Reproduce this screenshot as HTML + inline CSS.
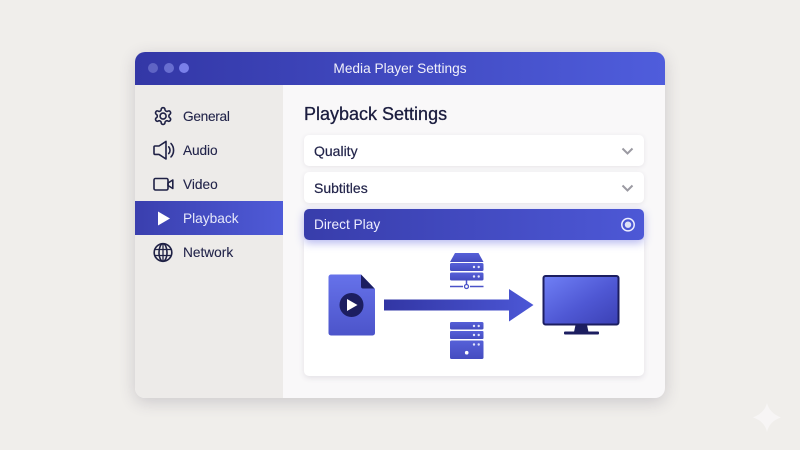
<!DOCTYPE html>
<html><head><meta charset="utf-8">
<style>
html,body{margin:0;padding:0}
body{width:800px;height:450px;background:#f0eeeb;overflow:hidden;position:relative;font-family:"Liberation Sans",sans-serif;color:#1b1d3f}
.abs{position:absolute}
#win{left:135px;top:52px;width:530px;height:346px;border-radius:10px;box-shadow:0 4px 16px rgba(60,55,80,.2);background:#f9f8f9}
#title{left:0;top:0;width:530px;height:33px;border-radius:10px 10px 0 0;background:linear-gradient(90deg,#3337a6,#4f5ddc)}
#title span{position:absolute;left:0;width:530px;top:9px;text-align:center;color:#f0f0fa;font-size:13.7px;line-height:16px}
.dot{width:10px;height:10px;border-radius:50%;top:11px}
#side{left:0;top:33px;width:148px;height:313px;background:#edebe9;border-radius:0 0 0 10px}
.lbl{position:absolute;left:183px;font-size:13.7px;color:#22244a;line-height:16px;-webkit-text-stroke:.1px #22244a}
#pb{left:135px;top:201px;width:148px;height:34px;background:linear-gradient(90deg,#3a3fae,#4f5bd8)}
h1{position:absolute;left:304px;top:104px;margin:0;font-size:18px;font-weight:normal;color:#1b1d3f;-webkit-text-stroke:.3px #1b1d3f;line-height:21px}
.row{position:absolute;left:304px;width:340px;height:31px;background:#fff;border-radius:5px;box-shadow:0 1px 5px rgba(70,60,90,.1)}
.row span{position:absolute;left:10px;top:8px;font-size:14px;line-height:16px;color:#22244a;-webkit-text-stroke:.2px #22244a}
#dp{top:209px;background:linear-gradient(90deg,#383dab,#4d58d6);box-shadow:0 3px 9px rgba(70,75,215,.4)}
#dp span{color:#eef;-webkit-text-stroke:0;font-size:13.7px}
#panel{left:304px;top:240px;width:340px;height:136px;background:#fff;border-radius:0 0 5px 5px;box-shadow:0 2px 6px rgba(70,60,90,.12)}
</style></head><body>
<div class="abs" id="win">
 <div class="abs" id="side"></div>
 <div class="abs" id="title">
  <div class="abs dot" style="left:13px;background:#5f64c4"></div>
  <div class="abs dot" style="left:29px;background:#686ed0"></div>
  <div class="abs dot" style="left:44px;background:#7a80ea"></div>
  <span>Media Player Settings</span>
 </div>
</div>
<div class="abs" id="pb"></div>

<svg class="abs" style="left:0;top:0" width="800" height="450" viewBox="0 0 800 450" fill="none" stroke="#1f2145" stroke-width="1.600" stroke-linejoin="round" stroke-linecap="round">
 <!-- gear -->
 <g transform="translate(153 106) scale(.84)" stroke-width="1.900">
  <path d="M12.22 2h-.44a2 2 0 0 0-2 2v.18a2 2 0 0 1-1 1.73l-.43.25a2 2 0 0 1-2 0l-.15-.08a2 2 0 0 0-2.730.73l-.22.38a2 2 0 0 0 .73 2.730l.15.1a2 2 0 0 1 1 1.720v.51a2 2 0 0 1-1 1.740l-.15.09a2 2 0 0 0-.73 2.730l.22.38a2 2 0 0 0 2.730.73l.15-.08a2 2 0 0 1 2 0l.43.25a2 2 0 0 1 1 1.730V20a2 2 0 0 0 2 2h.44a2 2 0 0 0 2-2v-.18a2 2 0 0 1 1-1.730l.43-.25a2 2 0 0 1 2 0l.15.08a2 2 0 0 0 2.730-.73l.22-.39a2 2 0 0 0-.73-2.730l-.15-.08a2 2 0 0 1-1-1.740v-.5a2 2 0 0 1 1-1.740l.15-.09a2 2 0 0 0 .73-2.730l-.22-.38a2 2 0 0 0-2.730-.73l-.15.08a2 2 0 0 1-2 0l-.43-.25a2 2 0 0 1-1-1.730V4a2 2 0 0 0-2-2z"/>
  <circle cx="12" cy="12" r="3.600"/>
 </g>
 <!-- speaker -->
 <path d="M155 146h4l7-4.600v17.600l-7-4.600h-4a1 1 0 0 1-1-1v-6.400a1 1 0 0 1 1-1z"/>
 <path d="M168.700 146.800a5 5 0 0 1 0 6.800M171 143.500a10 10 0 0 1 0 13.400"/>
 <!-- video -->
 <rect x="154" y="178.500" width="14" height="11.500" rx="1.500"/>
 <path d="M168 183l4.800-3v8.500L168 185.500z"/>
 <!-- globe -->
 <circle cx="163" cy="252.500" r="8.800"/>
 <ellipse cx="163" cy="252.500" rx="4" ry="8.800"/>
 <path d="M163 244v17M155.500 249.500h15M155.500 255.500h15" stroke-width="1.300"/>
</svg>
<svg class="abs" style="left:0;top:0" width="800" height="450" viewBox="0 0 800 450">
 <path d="M158 211.500L170 218.500L158 225.500z" fill="#fff"/>
</svg>

<div class="lbl" style="top:109px;letter-spacing:-.3px">General</div>
<div class="lbl" style="top:143px;letter-spacing:-.1px">Audio</div>
<div class="lbl" style="top:177px">Video</div>
<div class="lbl" style="top:211px;color:#e6e8fa;-webkit-text-stroke:0">Playback</div>
<div class="lbl" style="top:245px">Network</div>

<h1>Playback Settings</h1>
<div class="row" style="top:135px"><span>Quality</span></div>
<div class="row" style="top:172px"><span>Subtitles</span></div>
<div class="abs" id="panel"></div>
<div class="row" id="dp"><span>Direct Play</span></div>

<svg class="abs" style="left:0;top:0" width="800" height="450" viewBox="0 0 800 450">
 <defs>
  <linearGradient id="f" x1="0" y1="0" x2="0" y2="1"><stop offset="0" stop-color="#6672ea"/><stop offset="1" stop-color="#4c54ca"/></linearGradient>
  <linearGradient id="s" x1="0" y1="0" x2="1" y2="1"><stop offset="0" stop-color="#7080f6"/><stop offset=".55" stop-color="#4f58d4"/><stop offset="1" stop-color="#3b40b4"/></linearGradient>
  <linearGradient id="a" x1="0" y1="0" x2="1" y2="0"><stop offset="0" stop-color="#3236a4"/><stop offset="1" stop-color="#4c57d6"/></linearGradient>
  <linearGradient id="b" x1="0" y1="0" x2="0" y2="1"><stop offset="0" stop-color="#5660d8"/><stop offset="1" stop-color="#454cc0"/></linearGradient>
 </defs>
 <!-- chevrons -->
 <path d="M622.500 148.500l5 5 5-5M622.500 185.500l5 5 5-5" fill="none" stroke="#9b9aa2" stroke-width="2"/>
 <!-- radio -->
 <circle cx="628" cy="224.700" r="6.200" fill="none" stroke="#eef" stroke-width="1.500"/>
 <circle cx="628" cy="224.700" r="3.200" fill="#dfe1f6"/>
 <!-- file -->
 <path d="M331 274.500H361L375 289V333a2.500 2.500 0 0 1-2.500 2.500H331a2.500 2.500 0 0 1-2.500-2.500V277a2.500 2.500 0 0 1 2.500-2.500z" fill="url(#f)"/>
 <path d="M361 274.500L374.500 288.500H363a2 2 0 0 1-2-2z" fill="#1c1e60"/>
 <circle cx="351.500" cy="305" r="12" fill="#1c1e60"/>
 <path d="M347 299L357.500 305L347 311z" fill="#fff"/>
 <!-- arrow -->
 <path d="M384 299.500H509V289L533.500 305L509 321.500V310.500H384z" fill="url(#a)"/>
 <!-- server top -->
 <path d="M455 253H478.500L483.500 262H450z" fill="url(#b)"/>
 <rect x="450" y="263" width="33.500" height="8" rx="1.500" fill="url(#b)"/>
 <rect x="450" y="272.500" width="33.500" height="8" rx="1.500" fill="url(#b)"/>
 <g fill="#e2e5fb"><circle cx="474" cy="267" r="1.200"/><circle cx="478.700" cy="267" r="1.200"/><circle cx="474" cy="276.500" r="1.200"/><circle cx="478.700" cy="276.500" r="1.200"/></g>
 <path d="M466.500 280V285M450 286.500H463M470 286.500H483.500" stroke="#4a52c8" stroke-width="1.500" fill="none"/>
 <circle cx="466.500" cy="286.500" r="2" fill="#fff" stroke="#4a52c8" stroke-width="1.300"/>
 <!-- server bottom -->
 <rect x="450" y="322" width="33.500" height="7.500" rx="1.500" fill="url(#b)"/>
 <rect x="450" y="331" width="33.500" height="8" rx="1" fill="url(#b)"/>
 <rect x="450" y="340.500" width="33.500" height="18.500" rx="1.500" fill="url(#b)"/>
 <g fill="#e2e5fb"><circle cx="474" cy="326" r="1.200"/><circle cx="478.700" cy="326" r="1.200"/><circle cx="474" cy="335" r="1.200"/><circle cx="478.700" cy="335" r="1.200"/><circle cx="474" cy="344.500" r="1.200"/><circle cx="478.700" cy="344.500" r="1.200"/></g>
 <circle cx="466.700" cy="352.700" r="1.800" fill="#fff"/>
 <!-- monitor -->
 <rect x="543.500" y="276" width="75" height="48.500" rx="2" fill="url(#s)" stroke="#1c1e60" stroke-width="2"/>
 <path d="M575.500 325H587L588.500 332H574z" fill="#1c1e60"/>
 <rect x="564" y="331.500" width="35" height="3" rx="1" fill="#1c1e60"/>
 <!-- sparkle -->
 <path d="M767 403Q769.500 413 781 417.500Q769.500 421 767 432Q764.500 421 753 417.500Q764.500 413 767 403z" fill="#f7f5f5"/>
 <circle cx="767" cy="417.500" r="5.500" fill="#f7f5f5"/>
</svg>
</body></html>
